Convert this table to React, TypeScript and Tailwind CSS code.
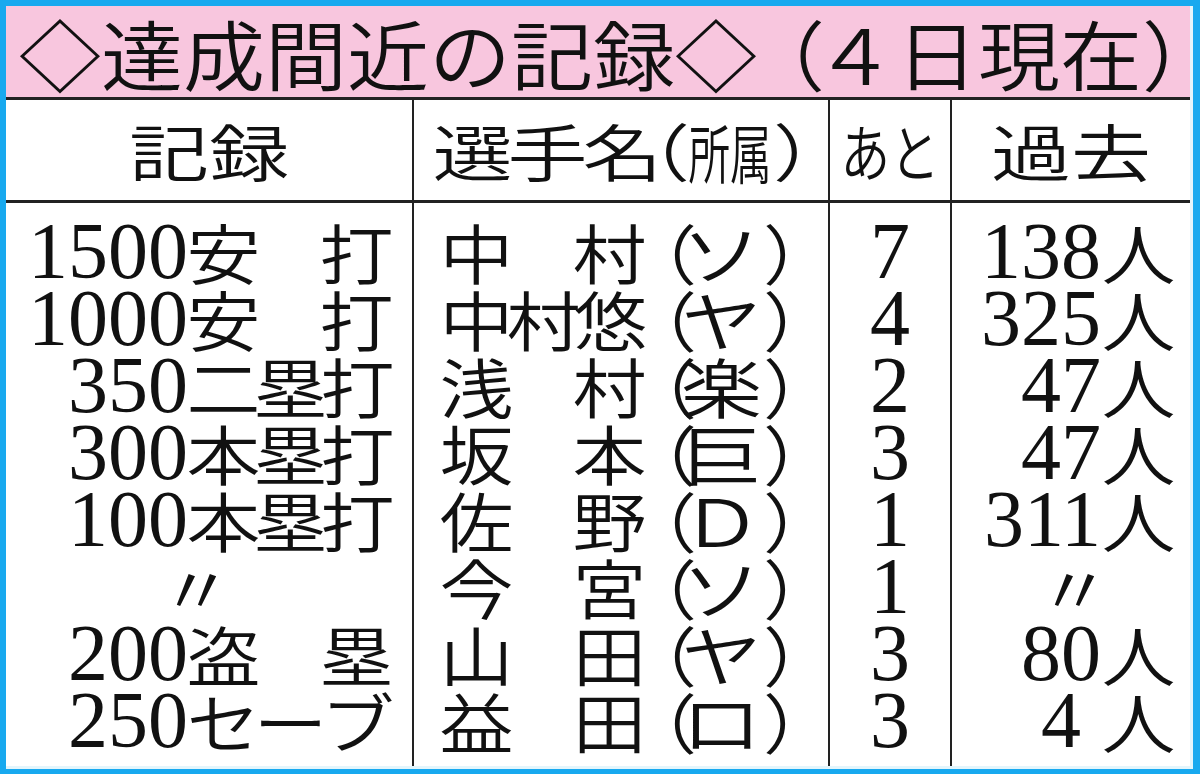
const JP = "font-['Noto_Sans_CJK_JP',sans-serif]";
const NUM = "font-['Liberation_Serif','Noto_Sans_CJK_JP',serif] font-normal text-[80px] leading-none";

type Row = {
  num: string;
  label: string[] | null;
  name: string[];
  team: string;
  left: string;
  past: string | null;
  pastGap?: string;
};

const ROWS: Row[] = [
  { num: '1500', label: ['安', '打'], name: ['中', '村'], team: 'ソ', left: '7', past: '138' },
  { num: '1000', label: ['安', '打'], name: ['中', '村', '悠'], team: 'ヤ', left: '4', past: '325' },
  { num: '350', label: ['二', '塁', '打'], name: ['浅', '村'], team: '楽', left: '2', past: '47' },
  { num: '300', label: ['本', '塁', '打'], name: ['坂', '本'], team: '巨', left: '3', past: '47' },
  { num: '100', label: ['本', '塁', '打'], name: ['佐', '野'], team: 'Ｄ', left: '1', past: '311' },
  { num: '', label: null, name: ['今', '宮'], team: 'ソ', left: '1', past: null },
  { num: '200', label: ['盗', '塁'], name: ['山', '田'], team: 'ヤ', left: '3', past: '80' },
  { num: '250', label: ['セ', 'ー', 'ブ'], name: ['益', '田'], team: 'ロ', left: '3', past: '4', pastGap: 'mr-[24px]' },
];

// one flattened body character in a 67px cell
const Ch = ({ c, className = '' }: { c: string; className?: string }) => (
  <span className={`flex w-[67px] shrink-0 justify-center scale-y-[0.88] ${className}`}>{c}</span>
);

const Title = () => (
  <div className="flex h-[94px] shrink-0 items-center border-b-[3px] border-[#222] bg-[#f8c6de] pl-[13px] text-[82px] leading-none">
    {['◇', '達', '成', '間', '近', 'の', '記', '録', '◇'].map((c, i) => (
      <span key={i} className="flex w-[82px] shrink-0 justify-center scale-y-[0.93]">{c}</span>
    ))}
    <span className="-ml-[14px] flex w-[82px] shrink-0 justify-center scale-y-[0.93]">（</span>
    <span className="-ml-[11px] flex w-[82px] shrink-0 justify-center scale-y-[0.93]">４</span>
    {['日', '現', '在'].map((c, i) => (
      <span key={i} className="flex w-[82px] shrink-0 justify-center scale-y-[0.93]">{c}</span>
    ))}
    <span className="flex w-[40px] shrink-0 justify-start scale-y-[0.93]">）</span>
  </div>
);

const Header = () => (
  <div className="flex h-[103px] shrink-0 border-b-[3px] border-[#222] text-[80px] leading-none">
    <div className="flex w-[406px] shrink-0 items-center justify-center">
      <span className="flex w-[80px] shrink-0 justify-center scale-y-[0.78]">記</span>
      <span className="flex w-[80px] shrink-0 justify-center scale-y-[0.78]">録</span>
    </div>
    <div className="flex w-[416px] shrink-0 items-center border-l-2 border-[#222] pl-[21px]">
      {['選', '手', '名'].map((c) => (
        <span key={c} className="flex w-[75px] shrink-0 justify-center scale-y-[0.78]">{c}</span>
      ))}
      <span className="-ml-[50px] flex w-[80px] shrink-0 justify-center scale-y-[0.78]">（</span>
      <span className="-ml-[5px] flex w-[90px] shrink-0 justify-center">
        <span className="inline-block shrink-0 whitespace-nowrap scale-x-[0.52] scale-y-[0.8]">所属</span>
      </span>
      <span className="-ml-[2px] flex w-[80px] shrink-0 justify-center scale-y-[0.78]">）</span>
    </div>
    <div className="flex w-[122px] shrink-0 items-center justify-center border-l-2 border-[#222]">
      <span className="inline-block shrink-0 whitespace-nowrap scale-x-[0.62] scale-y-[0.78]">あと</span>
    </div>
    <div className="flex flex-1 items-center justify-center border-l-2 border-[#222]">
      <span className="flex w-[80px] shrink-0 justify-center scale-y-[0.78]">過</span>
      <span className="flex w-[80px] shrink-0 justify-center scale-y-[0.78]">去</span>
    </div>
  </div>
);

const Body = () => (
  <div className="flex flex-1 text-[74px] leading-none">
    {/* 記録 */}
    <div className="flex w-[406px] shrink-0 flex-col pt-[14px]">
      {ROWS.map((r, i) => (
        <div key={i} className="flex h-[67px] items-center justify-end pr-[22px]">
          {r.label ? (
            <>
              <span className={`${NUM} mr-[2px]`}>{r.num}</span>
              <div className="flex w-[200px] justify-between">
                {r.label.map((c, j) => <Ch key={j} c={c} />)}
              </div>
            </>
          ) : (
            <Ch c="〃" className="mr-[160px]" />
          )}
        </div>
      ))}
    </div>

    {/* 選手名（所属） */}
    <div className="flex w-[416px] shrink-0 flex-col border-l-2 border-[#222] pt-[14px]">
      {ROWS.map((r, i) => (
        <div key={i} className="flex h-[67px] items-center pl-[29px]">
          <div className="flex w-[200px] shrink-0 justify-between">
            {r.name.map((c, j) => <Ch key={j} c={c} />)}
          </div>
          <span className="-ml-[20px] flex w-[74px] shrink-0 justify-center scale-y-[0.88]">（</span>
          <Ch c={r.team} className="-ml-[9px] scale-x-[1.1]" />
          <span className="ml-[8px] flex w-[74px] shrink-0 justify-center scale-y-[0.88]">）</span>
        </div>
      ))}
    </div>

    {/* あと */}
    <div className="flex w-[122px] shrink-0 flex-col border-l-2 border-[#222] pt-[14px]">
      {ROWS.map((r, i) => (
        <div key={i} className="flex h-[67px] items-center justify-center">
          <span className={NUM}>{r.left}</span>
        </div>
      ))}
    </div>

    {/* 過去 */}
    <div className="flex flex-1 flex-col border-l-2 border-[#222] pt-[14px]">
      {ROWS.map((r, i) => (
        <div key={i} className="flex h-[67px] items-center justify-end pr-[18px]">
          {r.past ? (
            <>
              <span className={`${NUM} ${r.pastGap ?? 'mr-[4px]'}`}>{r.past}</span>
              <Ch c="人" />
            </>
          ) : (
            <Ch c="〃" className="mr-[64px]" />
          )}
        </div>
      ))}
    </div>
  </div>
);

export default function App() {
  return (
    <div className={`h-[774px] w-[1200px] overflow-hidden bg-[#18a9ef] pb-[5px] pl-[6px] pr-[7px] pt-[6px] font-[350] text-[#111] ${JP}`}>
      <div className="flex h-full flex-col border-b-[3px] border-r-[3px] border-[#e3f5fc] bg-white">
        <Title />
        <Header />
        <Body />
      </div>
    </div>
  );
}
